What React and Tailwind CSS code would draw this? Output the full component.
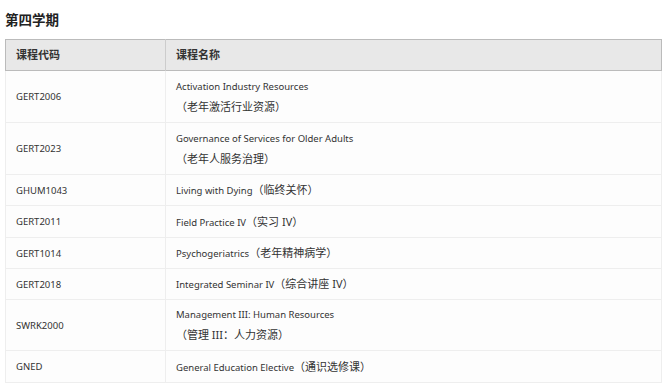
import React from "react";

const courses = [
  { code: "GERT2006", en: "Activation Industry Resources", zh: "（老年激活行业资源）", wrap: true, h: "h-[52px]" },
  { code: "GERT2023", en: "Governance of Services for Older Adults", zh: "（老年人服务治理）", wrap: true, h: "h-[52px]" },
  { code: "GHUM1043", en: "Living with Dying", zh: "（临终关怀）", h: "h-[31px]" },
  { code: "GERT2011", en: "Field Practice IV", zh: "（实习 IV）", h: "h-[32px]" },
  { code: "GERT1014", en: "Psychogeriatrics", zh: "（老年精神病学）", h: "h-[31px]" },
  { code: "GERT2018", en: "Integrated Seminar IV", zh: "（综合讲座 IV）", h: "h-[31px]" },
  { code: "SWRK2000", en: "Management III: Human Resources", zh: "（管理 III：人力资源）", wrap: true, h: "h-[51px]" },
  { code: "GNED", en: "General Education Elective", zh: "（通识选修课）", h: "h-[32px]" },
];

// latin text renders a touch smaller than the CJK glyphs in the source
const Zh = ({ children }) => <span className="text-[11px] leading-[20px]">{children}</span>;

export default function App() {
  return (
    <div className="w-[670px] h-[387px] bg-white px-[5px] pt-[10px] text-[#333] font-['Noto_Sans','Noto_Sans_CJK_SC',sans-serif]">
      <h3 className="text-[13.5px] font-bold leading-[20px] text-[#222]">第四学期</h3>
      <table className="mt-[9px] w-[657px] border-collapse text-[9.5px]">
        <thead>
          <tr className="bg-[#e8e8e8] border border-[#bbb]">
            <th className="w-[160px] border-r border-[#ccc] px-[10px] h-[31px] text-left font-semibold text-[11px]">课程代码</th>
            <th className="px-[10px] text-left font-semibold text-[11px]">课程名称</th>
          </tr>
        </thead>
        <tbody>
          {courses.map((c) => (
            <tr key={c.code} className={`${c.h} bg-[#fdfdfd] border border-[#eee]`}>
              <td className="border-r border-[#eee] px-[10px] pt-[5px] pb-[4px] leading-[20px] align-middle">{c.code}</td>
              <td className="px-[10px] pt-[5px] pb-[4px] leading-[20px] align-middle">
                {c.wrap ? (
                  <>
                    <div>{c.en}</div>
                    <div><Zh>{c.zh}</Zh></div>
                  </>
                ) : (
                  <span>{c.en}<Zh>{c.zh}</Zh></span>
                )}
              </td>
            </tr>
          ))}
        </tbody>
      </table>
    </div>
  );
}
